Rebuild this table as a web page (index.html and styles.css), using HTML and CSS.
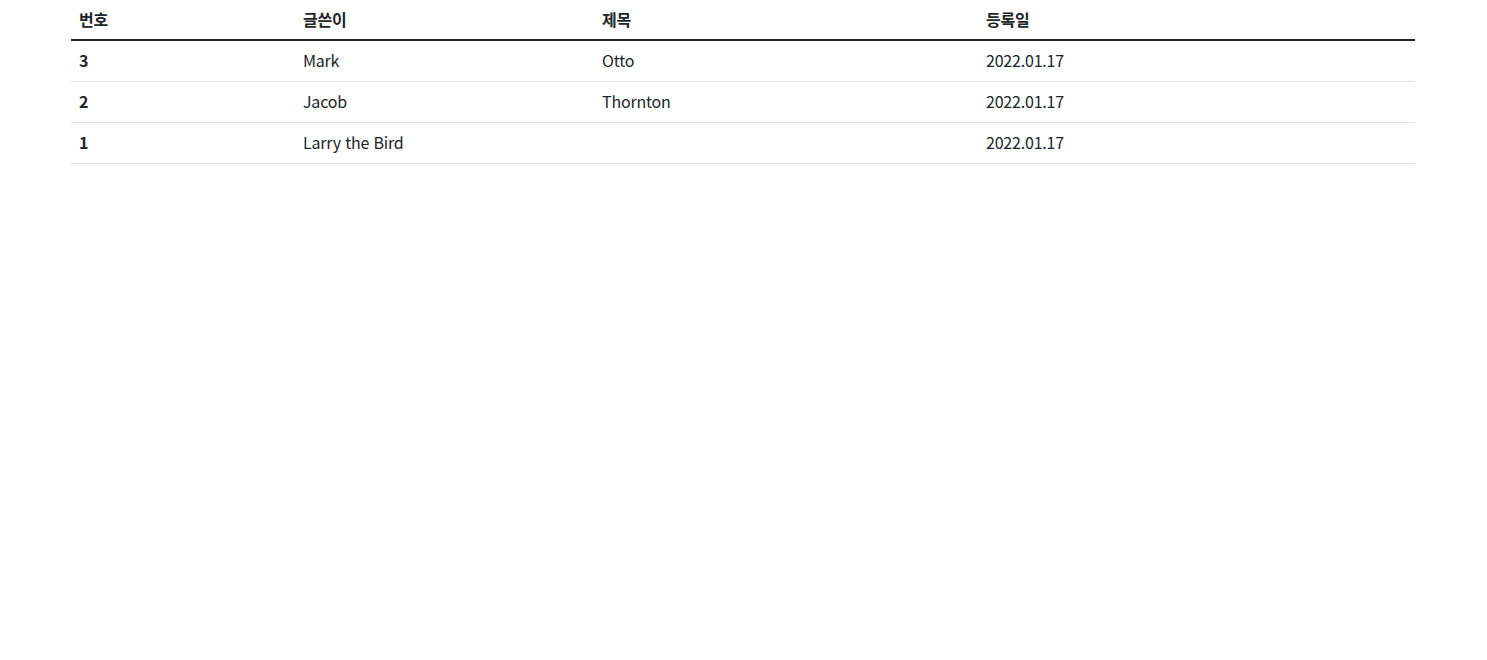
FILE: index.html
```html
<!DOCTYPE html>
<html lang="ko">
<head>
  <meta charset="UTF-8">
  <meta name="viewport" content="width=device-width, initial-scale=1.0">
  <title>게시판</title>
  <link rel="stylesheet" href="styles.css">
</head>
<body>
  <div class="container">
    <table class="board">
      <colgroup>
        <col class="col-no">
        <col class="col-writer">
        <col class="col-title">
        <col class="col-date">
      </colgroup>
      <thead>
        <tr>
          <th>번호</th>
          <th>글쓴이</th>
          <th>제목</th>
          <th>등록일</th>
        </tr>
      </thead>
      <tbody>
        <tr>
          <th>3</th>
          <td>Mark</td>
          <td>Otto</td>
          <td>2022.01.17</td>
        </tr>
        <tr>
          <th>2</th>
          <td>Jacob</td>
          <td>Thornton</td>
          <td>2022.01.17</td>
        </tr>
        <tr>
          <th>1</th>
          <td>Larry the Bird</td>
          <td></td>
          <td>2022.01.17</td>
        </tr>
      </tbody>
    </table>
  </div>
</body>
</html>
```

FILE: styles.css
```css
:root {
  --text: #212529;
  --line: #dee2e6;
}

body {
  margin: 0;
  font-family: "Noto Sans CJK KR", "Open Sans", sans-serif;
  font-size: 16px;
  line-height: 24px;
  color: var(--text);
  background-color: #fff;
}

.container {
  width: 1344px;
  margin-left: 71px;
}

.board {
  width: 100%;
  border-collapse: collapse;
  table-layout: fixed;
}

.col-no { width: 224px; }
.col-writer { width: 299px; }
.col-title { width: 384px; }
.col-date { width: 437px; }

.board th,
.board td {
  padding: 7px 8px 9px 8px;
  text-align: left;
  vertical-align: top;
  letter-spacing: -0.2px;
}

.board thead th {
  font-weight: bold;
  padding-top: 7px;
  padding-bottom: 8px;
  border-bottom: 2px solid var(--text);
}

.board tbody th {
  font-weight: bold;
}

.board tbody th,
.board tbody td {
  border-bottom: 1px solid var(--line);
}
```
